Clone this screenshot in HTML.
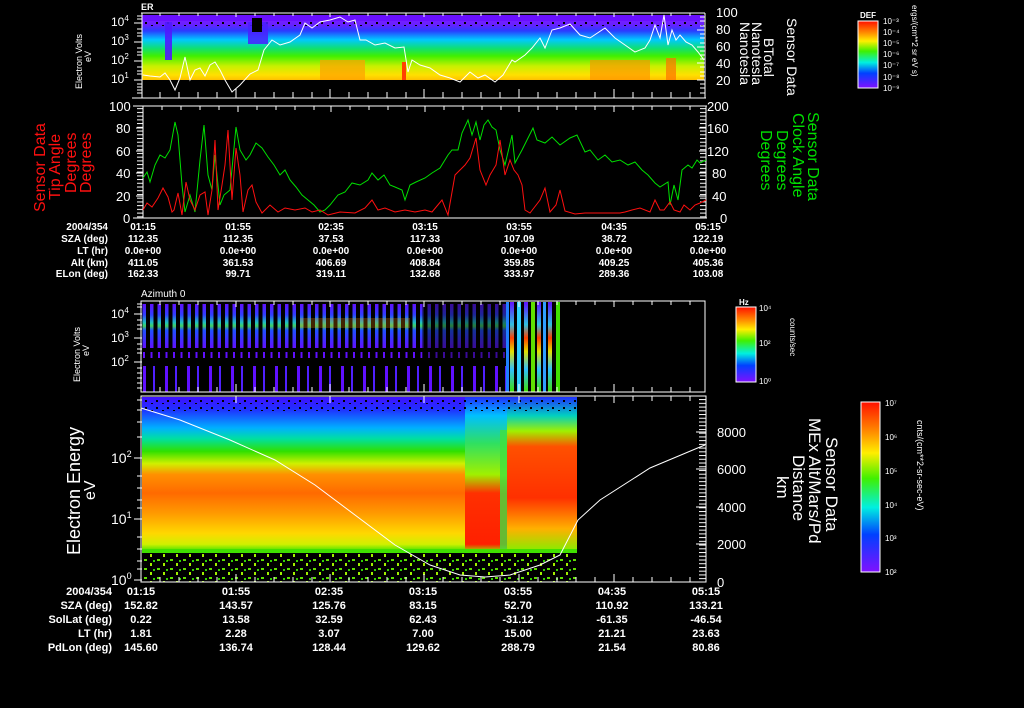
<!DOCTYPE html>
<html><head><meta charset="utf-8">
<style>
html,body{margin:0;padding:0;background:#000;}
svg{display:block;font-family:"Liberation Sans",sans-serif;}
</style></head>
<body>
<svg width="1024" height="708" viewBox="0 0 1024 708" xmlns="http://www.w3.org/2000/svg">
<defs>
<linearGradient id="g1" x1="0" y1="0" x2="0" y2="1">
<stop offset="0" stop-color="#7a1fff"/><stop offset="0.12" stop-color="#6a1fff"/>
<stop offset="0.22" stop-color="#2a3cff"/><stop offset="0.36" stop-color="#00c8ff"/>
<stop offset="0.5" stop-color="#10e070"/><stop offset="0.62" stop-color="#40f000"/>
<stop offset="0.78" stop-color="#c8f000"/><stop offset="0.92" stop-color="#ffe000"/>
<stop offset="1" stop-color="#ffc000"/></linearGradient>
<linearGradient id="g4" x1="0" y1="0" x2="0" y2="1">
<stop offset="0" stop-color="#4010ff"/><stop offset="0.08" stop-color="#2030ff"/>
<stop offset="0.2" stop-color="#00b0ff"/><stop offset="0.27" stop-color="#00e0a0"/>
<stop offset="0.35" stop-color="#30e000"/><stop offset="0.43" stop-color="#d0f000"/>
<stop offset="0.5" stop-color="#ff9000"/><stop offset="0.62" stop-color="#ff6a00"/>
<stop offset="0.75" stop-color="#ff9a00"/><stop offset="0.88" stop-color="#ffd800"/>
<stop offset="0.95" stop-color="#d0f000"/><stop offset="1" stop-color="#30e000"/></linearGradient>
<linearGradient id="gn" x1="0" y1="0" x2="0" y2="1">
<stop offset="0" stop-color="#2030ff"/><stop offset="0.12" stop-color="#00c0ff"/>
<stop offset="0.3" stop-color="#30e060"/><stop offset="0.5" stop-color="#a0f000"/>
<stop offset="0.62" stop-color="#ff3000"/><stop offset="0.95" stop-color="#ff2000"/><stop offset="1" stop-color="#90f000"/></linearGradient>
<linearGradient id="gr" x1="0" y1="0" x2="0" y2="1">
<stop offset="0" stop-color="#2030ff"/><stop offset="0.12" stop-color="#00d0c0"/>
<stop offset="0.22" stop-color="#a0f000"/><stop offset="0.32" stop-color="#ff5000"/>
<stop offset="0.65" stop-color="#ff3000"/><stop offset="0.85" stop-color="#ffb000"/><stop offset="1" stop-color="#80f000"/></linearGradient>
<linearGradient id="cb" x1="0" y1="0" x2="0" y2="1">
<stop offset="0" stop-color="#ff1000"/><stop offset="0.18" stop-color="#ff9000"/>
<stop offset="0.3" stop-color="#ffee00"/><stop offset="0.45" stop-color="#40f000"/>
<stop offset="0.62" stop-color="#00f0e0"/><stop offset="0.78" stop-color="#0040ff"/>
<stop offset="1" stop-color="#8010ff"/></linearGradient>
<linearGradient id="st" x1="0" y1="0" x2="0" y2="1">
<stop offset="0" stop-color="#6010ff"/><stop offset="0.25" stop-color="#3040ff"/>
<stop offset="0.42" stop-color="#20c0c0"/><stop offset="0.5" stop-color="#40d060"/>
<stop offset="0.6" stop-color="#2050ff"/><stop offset="1" stop-color="#6010ff"/></linearGradient>
<linearGradient id="st2" x1="0" y1="0" x2="0" y2="1">
<stop offset="0" stop-color="#6010ff"/><stop offset="0.25" stop-color="#30c0e0"/>
<stop offset="0.4" stop-color="#ff4000"/><stop offset="0.55" stop-color="#e0e000"/>
<stop offset="0.75" stop-color="#30c0ff"/><stop offset="1" stop-color="#40e000"/></linearGradient>
<pattern id="pst" x="141" y="0" width="7.5" height="708" patternUnits="userSpaceOnUse">
<rect x="1.5" y="304" width="3.5" height="44" fill="url(#st)"/>
<rect x="2" y="352" width="2" height="6" fill="#6010ff"/>
</pattern>
<pattern id="pbar" x="141" y="0" width="22" height="708" patternUnits="userSpaceOnUse">
<rect x="2" y="366" width="3" height="26" fill="#6010ff"/>
<rect x="12" y="366" width="2" height="26" fill="#5020ff"/>
</pattern>
<pattern id="spk" x="0" y="0" width="13" height="9" patternUnits="userSpaceOnUse">
<rect x="1" y="1" width="3" height="2" fill="#60e000"/><rect x="7" y="5" width="2" height="3" fill="#a0f000"/>
<rect x="10" y="2" width="2" height="2" fill="#30d000"/>
</pattern>
<pattern id="blk" x="0" y="0" width="11" height="7" patternUnits="userSpaceOnUse">
<rect x="2" y="1" width="2" height="2" fill="#000"/><rect x="8" y="4" width="2" height="1" fill="#000"/>
</pattern>
<pattern id="tk" x="0" y="0" width="10" height="3.73" patternUnits="userSpaceOnUse">
<rect x="0" y="0" width="10" height="1" fill="#fff"/></pattern>
</defs>

<!-- PANEL 1 -->
<text x="141" y="10" fill="#fff" font-size="9" font-weight="bold">ER</text>
<rect x="142" y="17" width="562" height="63" fill="url(#g1)"/>
<rect x="142" y="15" width="562" height="6" fill="#6a10ff"/>
<rect x="142" y="22" width="562" height="5" fill="url(#blk)"/>
<rect x="165" y="22" width="7" height="38" fill="#5018ff" opacity="0.9"/>
<rect x="248" y="22" width="20" height="22" fill="#4a20ff" opacity="0.85"/>
<rect x="252" y="18" width="10" height="14" fill="#000"/>
<rect x="320" y="60" width="45" height="20" fill="#ffa000" opacity="0.7"/>
<rect x="590" y="60" width="60" height="20" fill="#ff9000" opacity="0.65"/>
<rect x="666" y="58" width="10" height="22" fill="#ff7000" opacity="0.7"/>
<rect x="402" y="62" width="4" height="18" fill="#ff4000"/>
<line x1="141" y1="13" x2="705" y2="13" stroke="#fff" stroke-width="1"/>
<line x1="132" y1="98" x2="706" y2="98" stroke="#fff"/>
<line x1="142" y1="13" x2="142" y2="98" stroke="#fff"/>
<line x1="705" y1="13" x2="705" y2="98" stroke="#fff"/>
<g stroke="#fff"><path d="M160 98v-6M179 98v-6M198 98v-6M217 98v-6M236 98v-9M255 98v-6M274 98v-6M293 98v-6M312 98v-6M330 98v-9M349 98v-6M368 98v-6M387 98v-6M406 98v-6M424 98v-9M443 98v-6M462 98v-6M481 98v-6M500 98v-6M519 98v-9M538 98v-6M557 98v-6M576 98v-6M595 98v-6M614 98v-9M633 98v-6M652 98v-6M671 98v-6M690 98v-6"/>
<path d="M160 13v3M179 13v3M198 13v3M217 13v3M236 13v4M255 13v3M274 13v3M293 13v3M312 13v3M330 13v4M349 13v3M368 13v3M387 13v3M406 13v3M424 13v4M443 13v3M462 13v3M481 13v3M500 13v3M519 13v4M538 13v3M557 13v3M576 13v3M595 13v3M614 13v4M633 13v3M652 13v3M671 13v3M690 13v3"/>
<path d="M134 23h8M134 42h8M134 61h8M134 80h8M137 16h5M137 19h5M137 29h5M137 33h5M137 36h5M137 48h5M137 52h5M137 55h5M137 67h5M137 71h5M137 74h5M137 84h5M137 87h5M137 90h5M137 93h5"/>
<path d="M697 30h8M697 47h8M697 63h8M697 80h8M700 17h5M700 21h5M700 26h5M700 34h5M700 38h5M700 43h5M700 51h5M700 55h5M700 59h5M700 67h5M700 72h5M700 76h5M700 84h5M700 88h5M700 93h5"/></g>
<polyline fill="none" stroke="#fff" stroke-width="1" points="143,75 150,76 160,77 165,73 170,80 175,90 180,78 185,57 190,80 195,70 200,68 205,76 210,65 215,62 220,70 225,80 232,92 240,85 250,74 258,70 264,50 272,40 280,45 290,42 300,35 305,23 312,28 320,22 330,20 340,17 348,22 355,20 360,40 366,40 375,45 385,43 395,48 404,47 408,72 412,60 420,65 430,68 440,75 450,78 460,82 470,72 478,78 485,75 495,82 503,75 512,60 515,62 525,55 532,48 540,38 545,48 552,30 560,28 570,24 580,35 590,38 605,28 615,38 625,45 635,52 645,48 650,40 655,25 660,38 664,15 668,45 672,30 676,40 680,35 686,42 692,45 698,52 704,60"/>
<g fill="#fff" font-size="12"><text x="111" y="26">10<tspan font-size="8" dy="-5">4</tspan></text>
<text x="111" y="45">10<tspan font-size="8" dy="-5">3</tspan></text>
<text x="111" y="64">10<tspan font-size="8" dy="-5">2</tspan></text>
<text x="111" y="83">10<tspan font-size="8" dy="-5">1</tspan></text></g>
<g fill="#fff" font-size="13"><text x="716" y="17">100</text><text x="716" y="34">80</text><text x="716" y="51">60</text><text x="716" y="68">40</text><text x="716" y="85">20</text></g>
<text transform="translate(82,89) rotate(-90)" fill="#fff" font-size="9">Electron Volts</text>
<text transform="translate(91,62) rotate(-90)" fill="#fff" font-size="9">eV</text>
<g fill="#fff" font-size="14">
<text transform="translate(787,18) rotate(90)">Sensor Data</text>
<text transform="translate(764,38) rotate(90)">BTotal</text>
<text transform="translate(752,22) rotate(90)">Nanotesla</text>
<text transform="translate(740,22) rotate(90)">Nanotesla</text></g>
<text x="860" y="18" fill="#fff" font-size="8" font-weight="bold">DEF</text>
<rect x="858" y="21" width="20" height="67" fill="url(#cb)" stroke="#fff"/>
<g fill="#fff" font-size="8"><text x="883" y="24">10⁻³</text><text x="883" y="35">10⁻⁴</text><text x="883" y="46">10⁻⁵</text><text x="883" y="57">10⁻⁶</text><text x="883" y="68">10⁻⁷</text><text x="883" y="80">10⁻⁸</text><text x="883" y="91">10⁻⁹</text></g>
<text transform="translate(912,5) rotate(90)" fill="#fff" font-size="8">ergs/(cm**2 sr eV s)</text>

<!-- PANEL 2 -->
<line x1="133" y1="106" x2="707" y2="106" stroke="#fff"/>
<line x1="133" y1="218" x2="707" y2="218" stroke="#fff"/>
<line x1="143" y1="106" x2="143" y2="218" stroke="#fff"/>
<line x1="706" y1="106" x2="706" y2="218" stroke="#fff"/>
<rect x="137" y="107" width="6" height="111" fill="url(#tk)"/>
<rect x="700" y="107" width="6" height="111" fill="url(#tk)"/>
<g stroke="#fff"><path d="M136 106h7M136 128h7M136 151h7M136 173h7M136 196h7M699 128h7M699 151h7M699 173h7M699 196h7"/>
<path d="M162 106v4M181 106v4M200 106v4M219 106v4M238 106v6M257 106v4M276 106v4M295 106v4M314 106v4M331 106v6M350 106v4M369 106v4M388 106v4M407 106v4M425 106v6M444 106v4M463 106v4M482 106v4M501 106v4M519 106v6M538 106v4M557 106v4M576 106v4M595 106v4M614 106v6M633 106v4M652 106v4M671 106v4M690 106v4"/></g>
<polyline fill="none" stroke="#00e000" points="143,178 147,172 150,182 155,165 160,155 165,158 170,150 175,122 178,135 182,185 185,212 190,195 195,212 200,160 204,125 208,175 212,190 215,155 220,205 224,195 230,190 236,127 240,150 246,160 250,155 256,143 262,148 268,157 274,165 280,175 285,170 290,180 296,187 302,195 308,200 314,205 320,212 325,210 330,205 338,195 345,192 352,183 360,185 368,180 372,173 378,180 384,175 390,185 395,187 402,190 405,200 410,185 416,182 425,178 432,173 440,168 448,155 452,150 458,150 462,133 468,120 472,135 476,122 480,140 484,125 488,120 492,127 496,130 500,150 505,165 512,135 515,163 522,150 533,128 537,140 545,143 552,137 560,145 570,138 577,135 585,152 590,150 598,160 605,155 612,162 620,160 628,165 635,162 642,170 648,175 655,183 660,187 668,182 670,205 674,185 678,200 682,170 688,165 692,168 697,160 700,163 706,160"/>
<polyline fill="none" stroke="#ff1010" points="143,210 147,203 152,207 158,198 163,188 168,197 172,212 174,210 178,193 182,215 186,182 190,200 195,210 200,195 205,192 208,215 212,190 215,140 218,210 222,185 225,165 228,130 232,200 236,148 240,175 243,212 248,190 252,185 256,202 262,213 270,205 278,212 285,208 295,210 305,208 312,212 320,210 328,215 340,212 355,213 365,208 372,200 378,210 385,208 395,212 405,210 415,212 425,210 432,212 442,200 448,215 455,175 460,170 465,165 470,158 476,138 480,170 486,185 490,175 496,165 500,140 505,175 510,160 514,170 518,175 522,185 525,210 530,213 540,200 545,188 550,212 556,205 560,190 565,211 575,214 585,213 598,213 610,213 620,213 625,212 632,210 640,208 650,212 655,200 660,210 664,210 670,202 674,210 680,212 684,205 690,210 695,205 700,203 706,200"/>
<g fill="#fff" font-size="13"><text x="109" y="111">100</text><text x="116" y="133">80</text><text x="116" y="156">60</text><text x="116" y="178">40</text><text x="116" y="201">20</text><text x="123" y="223">0</text>
<text x="707" y="111">200</text><text x="707" y="133">160</text><text x="707" y="156">120</text><text x="712" y="178">80</text><text x="712" y="201">40</text><text x="720" y="223">0</text></g>
<g fill="#ff1010" font-size="16">
<text transform="translate(45,212) rotate(-90)">Sensor Data</text>
<text transform="translate(60,200) rotate(-90)">Tip Angle</text>
<text transform="translate(76,193) rotate(-90)">Degrees</text>
<text transform="translate(91,193) rotate(-90)">Degrees</text></g>
<g fill="#00e000" font-size="16">
<text transform="translate(808,112) rotate(90)">Sensor Data</text>
<text transform="translate(793,113) rotate(90)">Clock Angle</text>
<text transform="translate(777,130) rotate(90)">Degrees</text>
<text transform="translate(761,130) rotate(90)">Degrees</text></g>
<g fill="#fff" font-size="10" font-weight="bold">
<g text-anchor="end"><text x="108" y="230">2004/354</text><text x="108" y="242">SZA (deg)</text><text x="108" y="254">LT (hr)</text><text x="108" y="266">Alt (km)</text><text x="108" y="277">ELon (deg)</text></g>
<g text-anchor="middle">
<text x="143" y="230">01:15</text><text x="238" y="230">01:55</text><text x="331" y="230">02:35</text><text x="425" y="230">03:15</text><text x="519" y="230">03:55</text><text x="614" y="230">04:35</text><text x="708" y="230">05:15</text>
<text x="143" y="242">112.35</text><text x="238" y="242">112.35</text><text x="331" y="242">37.53</text><text x="425" y="242">117.33</text><text x="519" y="242">107.09</text><text x="614" y="242">38.72</text><text x="708" y="242">122.19</text>
<text x="143" y="254">0.0e+00</text><text x="238" y="254">0.0e+00</text><text x="331" y="254">0.0e+00</text><text x="425" y="254">0.0e+00</text><text x="519" y="254">0.0e+00</text><text x="614" y="254">0.0e+00</text><text x="708" y="254">0.0e+00</text>
<text x="143" y="266">411.05</text><text x="238" y="266">361.53</text><text x="331" y="266">406.69</text><text x="425" y="266">408.84</text><text x="519" y="266">359.85</text><text x="614" y="266">409.25</text><text x="708" y="266">405.36</text>
<text x="143" y="277">162.33</text><text x="238" y="277">99.71</text><text x="331" y="277">319.11</text><text x="425" y="277">132.68</text><text x="519" y="277">333.97</text><text x="614" y="277">289.36</text><text x="708" y="277">103.08</text></g></g>

<!-- PANEL 3 -->
<text x="141" y="297" fill="#fff" font-size="10">Azimuth 0</text>
<rect x="142" y="301" width="280" height="91" fill="url(#pst)"/>
<rect x="142" y="301" width="364" height="91" fill="url(#pbar)"/>
<rect x="422" y="301" width="84" height="91" fill="url(#pst)" opacity="0.6"/>
<rect x="300" y="318" width="110" height="10" fill="#ff9000" opacity="0.25"/>
<rect x="506" y="302" width="3" height="90" fill="#2080ff"/>
<rect x="510" y="302" width="4" height="90" fill="url(#st2)"/>
<rect x="517" y="302" width="4" height="90" fill="#30d0ff"/>
<rect x="524" y="302" width="4" height="90" fill="url(#st2)"/>
<rect x="531" y="302" width="4" height="90" fill="#60e000"/>
<rect x="537" y="302" width="4" height="90" fill="url(#st2)"/>
<rect x="543" y="302" width="3" height="90" fill="#30a0ff"/>
<rect x="548" y="302" width="4" height="90" fill="url(#st2)"/>
<rect x="556" y="302" width="4" height="90" fill="#40e000"/>
<rect x="141" y="301" width="564" height="91" fill="none" stroke="#fff"/>
<g stroke="#fff"><path d="M160 392v-5M179 392v-5M198 392v-5M217 392v-5M236 392v-8M255 392v-5M274 392v-5M293 392v-5M312 392v-5M330 392v-8M349 392v-5M368 392v-5M387 392v-5M406 392v-5M424 392v-8M443 392v-5M462 392v-5M481 392v-5M500 392v-5M519 392v-8M538 392v-5M557 392v-5M576 392v-5M595 392v-5M614 392v-8M633 392v-5M652 392v-5M671 392v-5M690 392v-5"/>
<path d="M160 301v4M179 301v4M198 301v4M217 301v4M236 301v6M255 301v4M274 301v4M293 301v4M312 301v4M330 301v6M349 301v4M368 301v4M387 301v4M406 301v4M424 301v6M443 301v4M462 301v4M481 301v4M500 301v4M519 301v6M538 301v4M557 301v4M576 301v4M595 301v4M614 301v6M633 301v4M652 301v4M671 301v4M690 301v4"/>
<path d="M134 314h8M134 338h8M134 362h8M137 304h5M137 307h5M137 320h5M137 325h5M137 329h5M137 344h5M137 349h5M137 353h5M137 368h5M137 373h5M137 378h5M137 383h5M137 388h5"/></g>
<g fill="#fff" font-size="12"><text x="111" y="318">10<tspan font-size="8" dy="-5">4</tspan></text><text x="111" y="342">10<tspan font-size="8" dy="-5">3</tspan></text><text x="111" y="366">10<tspan font-size="8" dy="-5">2</tspan></text></g>
<text transform="translate(80,382) rotate(-90)" fill="#fff" font-size="9">Electron Volts</text>
<text transform="translate(89,356) rotate(-90)" fill="#fff" font-size="9">eV</text>
<text x="739" y="305" fill="#fff" font-size="8" font-weight="bold">Hz</text>
<rect x="736" y="307" width="20" height="75" fill="url(#cb)" stroke="#fff"/>
<g fill="#fff" font-size="8"><text x="759" y="311">10⁴</text><text x="759" y="346">10²</text><text x="759" y="384">10⁰</text></g>
<text transform="translate(790,318) rotate(90)" fill="#fff" font-size="8">counts/sec</text>

<!-- PANEL 4 -->
<rect x="142" y="397" width="435" height="155" fill="url(#g4)"/>
<rect x="142" y="397" width="435" height="16" fill="url(#blk)"/>
<rect x="465" y="397" width="42" height="155" fill="url(#gn)"/>
<rect x="500" y="430" width="7" height="122" fill="#40e040" opacity="0.8"/>
<rect x="507" y="397" width="70" height="155" fill="url(#gr)"/>
<rect x="465" y="397" width="112" height="14" fill="url(#blk)"/>
<rect x="142" y="552" width="435" height="30" fill="url(#spk)"/>
<rect x="142" y="549" width="435" height="4" fill="#40e000"/>
<rect x="141" y="396" width="565" height="186" fill="none" stroke="#fff"/>
<g stroke="#fff"><path d="M160 582v-5M179 582v-5M198 582v-5M217 582v-5M236 582v-8M255 582v-5M274 582v-5M293 582v-5M312 582v-5M330 582v-8M349 582v-5M368 582v-5M387 582v-5M406 582v-5M424 582v-8M443 582v-5M462 582v-5M481 582v-5M500 582v-5M519 582v-8M538 582v-5M557 582v-5M576 582v-5M595 582v-5M614 582v-8M633 582v-5M652 582v-5M671 582v-5M690 582v-5"/>
<path d="M595 396v5M614 396v7M633 396v5M652 396v5M671 396v5M690 396v5M236 396v7M330 396v7M424 396v7M519 396v7"/>
<path d="M134 458h8M134 519h8M134 580h8M137 400h5M137 410h5M137 422h5M137 437h5M137 476h5M137 488h5M137 500h5M137 508h5M137 537h5M137 549h5M137 561h5M137 569h5"/></g>
<rect x="699" y="397" width="7" height="185" fill="url(#tk)"/>
<g stroke="#fff"><path d="M696 432h10M696 469h10M696 507h10M696 544h10"/></g>
<polyline fill="none" stroke="#fff" points="141,408 180,420 230,440 275,460 315,485 355,515 395,545 430,565 460,575 485,577 510,575 540,565 560,555 578,520 600,500 650,468 700,447 705,445"/>
<g fill="#fff" font-size="14"><text x="111" y="463">10<tspan font-size="9" dy="-6">2</tspan></text><text x="111" y="524">10<tspan font-size="9" dy="-6">1</tspan></text><text x="111" y="585">10<tspan font-size="9" dy="-6">0</tspan></text></g>
<g fill="#fff" font-size="13"><text x="717" y="437">8000</text><text x="717" y="474">6000</text><text x="717" y="512">4000</text><text x="717" y="549">2000</text><text x="717" y="587">0</text></g>
<text transform="translate(80,555) rotate(-90)" fill="#fff" font-size="18">Electron Energy</text>
<text transform="translate(95,500) rotate(-90)" fill="#fff" font-size="16">eV</text>
<g fill="#fff" font-size="17">
<text transform="translate(826,437) rotate(90)">Sensor Data</text>
<text transform="translate(809,418) rotate(90)">MEx Alt/Mars/Pd</text>
<text transform="translate(793,455) rotate(90)">Distance</text>
<text transform="translate(777,476) rotate(90)">km</text></g>
<rect x="861" y="402" width="19" height="170" fill="url(#cb)" stroke="#fff"/>
<g fill="#fff" font-size="8"><text x="885" y="406">10⁷</text><text x="885" y="440">10⁶</text><text x="885" y="474">10⁵</text><text x="885" y="508">10⁴</text><text x="885" y="541">10³</text><text x="885" y="575">10²</text></g>
<text transform="translate(917,420) rotate(90)" fill="#fff" font-size="9">cnts/(cm**2-sr-sec-eV)</text>
<g fill="#fff" font-size="11" font-weight="bold">
<g text-anchor="end"><text x="112" y="595">2004/354</text><text x="112" y="609">SZA (deg)</text><text x="112" y="623">SolLat (deg)</text><text x="112" y="637">LT (hr)</text><text x="112" y="651">PdLon (deg)</text></g>
<g text-anchor="middle">
<text x="141" y="595">01:15</text><text x="236" y="595">01:55</text><text x="329" y="595">02:35</text><text x="423" y="595">03:15</text><text x="518" y="595">03:55</text><text x="612" y="595">04:35</text><text x="706" y="595">05:15</text>
<text x="141" y="609">152.82</text><text x="236" y="609">143.57</text><text x="329" y="609">125.76</text><text x="423" y="609">83.15</text><text x="518" y="609">52.70</text><text x="612" y="609">110.92</text><text x="706" y="609">133.21</text>
<text x="141" y="623">0.22</text><text x="236" y="623">13.58</text><text x="329" y="623">32.59</text><text x="423" y="623">62.43</text><text x="518" y="623">-31.12</text><text x="612" y="623">-61.35</text><text x="706" y="623">-46.54</text>
<text x="141" y="637">1.81</text><text x="236" y="637">2.28</text><text x="329" y="637">3.07</text><text x="423" y="637">7.00</text><text x="518" y="637">15.00</text><text x="612" y="637">21.21</text><text x="706" y="637">23.63</text>
<text x="141" y="651">145.60</text><text x="236" y="651">136.74</text><text x="329" y="651">128.44</text><text x="423" y="651">129.62</text><text x="518" y="651">288.79</text><text x="612" y="651">21.54</text><text x="706" y="651">80.86</text></g></g>
</svg>
</body></html>
